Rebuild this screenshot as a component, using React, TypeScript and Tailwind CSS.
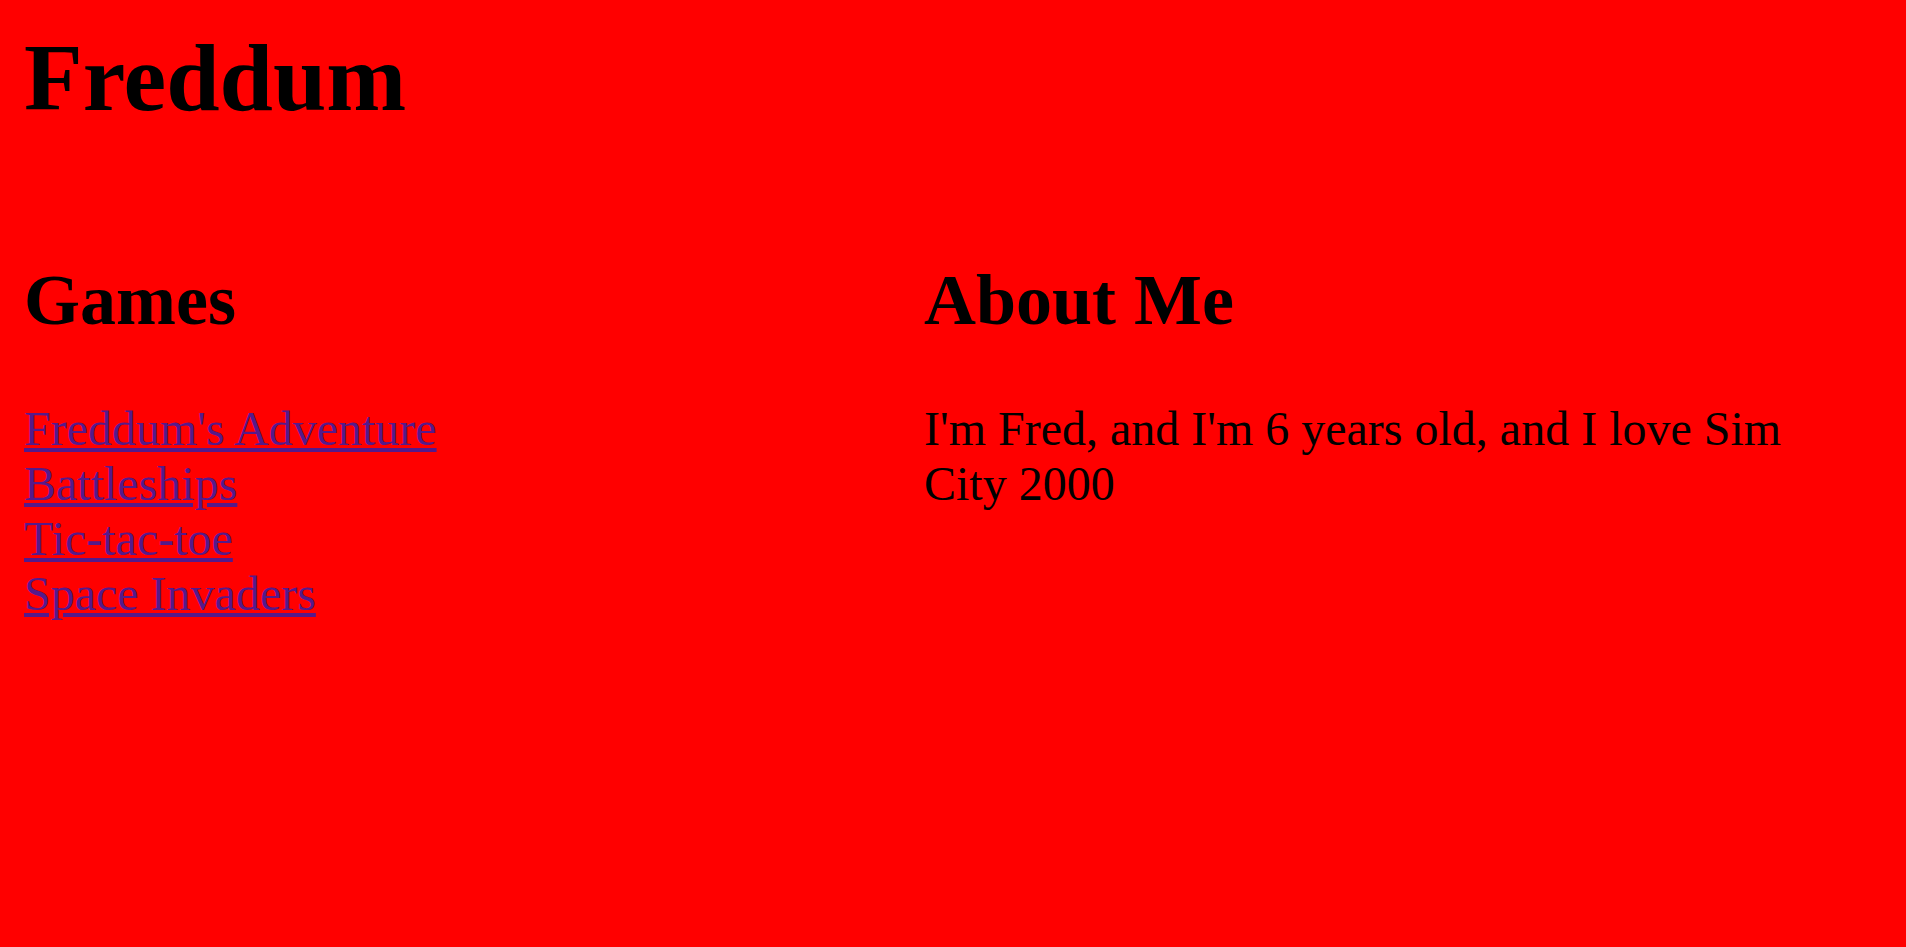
import React from "react";

export default function App() {
  const games = ["Freddum's Adventure", "Battleships", "Tic-tac-toe", "Space Invaders"];
  return (
    <div
      className="min-h-screen bg-[#ff0000] text-black pl-[24px] pt-[22px]"
      style={{ fontFamily: '"Liberation Serif", "Times New Roman", serif' }}
    >
      <h1 className="text-[96px] font-bold leading-[normal] m-0">Freddum</h1>
      <div className="grid grid-cols-[900px_900px] mt-[126px]">
        <section>
          <h2 className="text-[72px] font-bold leading-[normal] mb-[59px]">Games</h2>
          <div className="flex flex-col items-start text-[48px] leading-[normal]">
            {games.map((g) => (
              <a key={g} href="#" className="text-[#551a8b] underline">
                {g}
              </a>
            ))}
          </div>
        </section>
        <section>
          <h2 className="text-[72px] font-bold leading-[normal] mb-[59px]">About Me</h2>
          <p className="text-[48px] leading-[normal]">
            I'm Fred, and I'm 6 years old, and I love Sim City 2000
          </p>
        </section>
      </div>
    </div>
  );
}
